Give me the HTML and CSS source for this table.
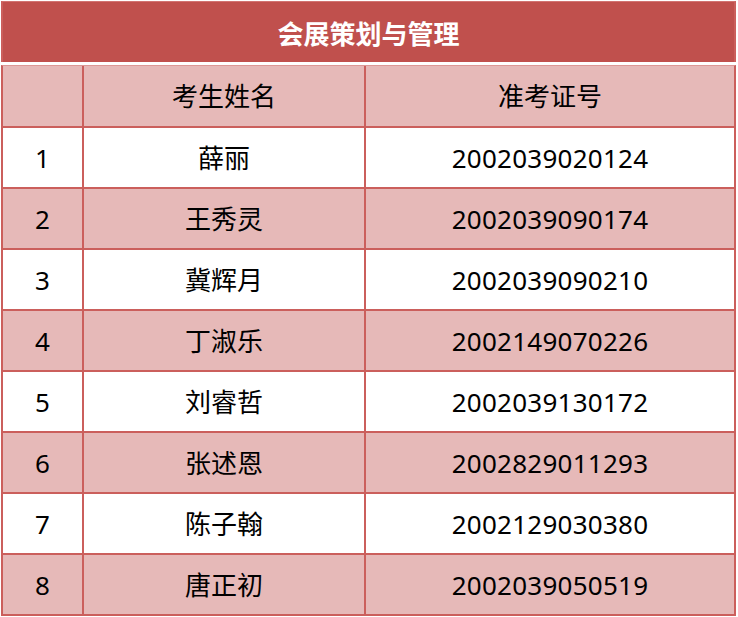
FILE: index.html
```html
<!DOCTYPE html>
<html lang="zh-CN">
<head>
<meta charset="utf-8">
<title>会展策划与管理</title>
<link rel="stylesheet" href="styles.css">
</head>
<body>
<div class="sheet">
  <div class="title">会展策划与管理</div>
  <div class="row head">
    <div class="cell"></div>
    <div class="cell">考生姓名</div>
    <div class="cell">准考证号</div>
  </div>
  <div class="row">
    <div class="cell">1</div><div class="cell">薛丽</div><div class="cell num">2002039020124</div>
  </div>
  <div class="row alt">
    <div class="cell">2</div><div class="cell">王秀灵</div><div class="cell num">2002039090174</div>
  </div>
  <div class="row">
    <div class="cell">3</div><div class="cell">冀辉月</div><div class="cell num">2002039090210</div>
  </div>
  <div class="row alt">
    <div class="cell">4</div><div class="cell">丁淑乐</div><div class="cell num">2002149070226</div>
  </div>
  <div class="row">
    <div class="cell">5</div><div class="cell">刘睿哲</div><div class="cell num">2002039130172</div>
  </div>
  <div class="row alt">
    <div class="cell">6</div><div class="cell">张述恩</div><div class="cell num">2002829011293</div>
  </div>
  <div class="row">
    <div class="cell">7</div><div class="cell">陈子翰</div><div class="cell num">2002129030380</div>
  </div>
  <div class="row alt">
    <div class="cell">8</div><div class="cell">唐正初</div><div class="cell num">2002039050519</div>
  </div>
</div>
</body>
</html>
```
FILE: styles.css
```css
html, body {
  margin: 0;
  padding: 0;
  background: #ffffff;
}

.sheet {
  margin: 1px 0 0 1px;
  width: 735px;
  font-family: "Noto Sans", "Noto Sans CJK SC", sans-serif;
  font-size: 26px;
  color: #000000;
}

.title {
  height: 60px;
  border-top: 1px solid #d27371;
  border-left: 2px solid #cb5f5c;
  border-right: 2px solid #cb5f5c;
  background: #c0504d;
  color: #ffffff;
  font-weight: bold;
  font-family: "Noto Sans CJK SC", sans-serif;
  display: flex;
  align-items: center;
  justify-content: center;
  margin-bottom: 3px;
}

.row {
  display: grid;
  grid-template-columns: 79px 280px 368px;
  column-gap: 2px;
  height: 59px;
  background: #cb5f5c;
  border-left: 2px solid #cb5f5c;
  border-right: 2px solid #cb5f5c;
  border-bottom: 2px solid #cb5f5c;
}

.row.head {
  height: 60px;
  border-top: 1px solid #dc9896;
}

.cell {
  background: #ffffff;
  display: flex;
  align-items: center;
  justify-content: center;
  line-height: 1;
}

.cell.num {
  letter-spacing: 0.25px;
}

.row.head .cell,
.row.alt .cell {
  background: #e6b9b8;
}
```
